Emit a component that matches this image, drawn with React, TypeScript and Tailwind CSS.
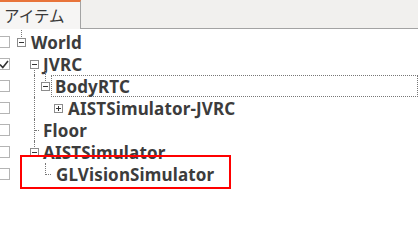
const Expander = ({ open }: { open: boolean }) => (
  <span className="relative flex h-[9px] w-[9px] items-center justify-center border border-[#8c8c8c] bg-white">
    <span className="absolute h-[1px] w-[5px] bg-[#333]" />
    {!open && <span className="absolute h-[5px] w-[1px] bg-[#333]" />}
  </span>
);

const Check = ({ checked }: { checked?: boolean }) => (
  <span className="ml-[-3px] flex h-[12px] w-[13px] shrink-0 items-center justify-center border border-[#b4b4b4] bg-white">
    {checked && (
      <svg width="10" height="9" viewBox="0 0 10 9">
        <path d="M1 4.5 L3.8 7.5 L9 1" fill="none" stroke="#333" strokeWidth="1.6" />
      </svg>
    )}
  </span>
);

const label = "text-[17px] font-bold leading-none tracking-[0.15px] text-[#3c3c3c] whitespace-nowrap";

export default function App() {
  return (
    <div className="relative h-[252px] w-[418px] overflow-hidden bg-white font-['Noto_Sans',sans-serif]">
      {/* tab bar */}
      <div className="flex h-[29px] border-b border-[#a3a3a3] bg-[#f1f0ee]">
        <div className="mb-[-1px] flex h-[29px] w-[81px] items-center border-r border-[#a3a3a3] border-t-2 border-t-[#e8743b] bg-[#f6f5f4] pl-[4px]">
          <span className="font-['Noto_Sans_CJK_JP',sans-serif] text-[15.5px] leading-none text-[#3a3a3a]">アイテム</span>
        </div>
      </div>

      <div className="pt-[2px]">
        {/* World */}
        <div className="relative flex h-[22px] items-center">
          <Check />
          <span className="absolute left-[21px] top-[-1px] h-[7px] border-l border-dotted border-[#777]" />
          <span className="ml-[7px]"><Expander open /></span>
          <span className={`ml-[5px] ${label}`}>World</span>
        </div>
        {/* JVRC */}
        <div className="relative flex h-[22px] items-center">
          <Check checked />
          <span className="absolute left-[34px] top-[15px] h-[7px] border-l border-dotted border-[#777]" />
          <span className="ml-[20px]"><Expander open /></span>
          <span className={`ml-[4px] ${label}`}>JVRC</span>
        </div>
        {/* BodyRTC */}
        <div className="relative flex h-[22px] items-center">
          <Check />
          <span className="absolute left-[34px] top-0 h-[22px] border-l border-dotted border-[#777]" />
          <span className="absolute left-[45px] top-[-5px] h-[11px] border-l border-dotted border-[#777]" />
          <span className="ml-[31px]"><Expander open /></span>
          <div className="ml-[1px] flex h-[22px] flex-1 items-center border border-dotted border-[#777] pl-[3px]">
            <span className={label}>BodyRTC</span>
          </div>
        </div>
        {/* AISTSimulator-JVRC */}
        <div className="relative flex h-[22px] items-center">
          <Check />
          <span className="absolute left-[34px] top-0 h-[22px] border-l border-dotted border-[#777]" />
          <span className="ml-[44px]"><Expander open={false} /></span>
          <span className={`ml-[5px] ${label}`}>AISTSimulator-JVRC</span>
        </div>
        {/* Floor */}
        <div className="relative flex h-[22px] items-center">
          <Check />
          <span className="absolute left-[34px] top-0 h-[22px] border-l border-dotted border-[#777]" />
          <span className="absolute left-[35px] top-[11px] w-[4px] border-t border-dotted border-[#777]" />
          <span className={`ml-[33px] ${label}`}>Floor</span>
        </div>
        {/* AISTSimulator */}
        <div className="relative flex h-[22px] items-center">
          <Check />
          <span className="absolute left-[34px] top-0 h-[6px] border-l border-dotted border-[#777]" />
          <span className="ml-[20px]"><Expander open /></span>
          <span className={`ml-[4px] ${label}`}>AISTSimulator</span>
        </div>
        {/* GLVisionSimulator */}
        <div className="relative flex h-[22px] items-center">
          <Check />
          <span className="absolute left-[45px] top-0 h-[12px] border-l border-dotted border-[#777]" />
          <span className="absolute left-[46px] top-[11px] w-[5px] border-t border-dotted border-[#777]" />
          <span className={`ml-[46px] ${label}`}>GLVisionSimulator</span>
        </div>
      </div>

      {/* highlight box */}
      <div className="absolute left-[20px] top-[155px] h-[34px] w-[211px] border-[2px] border-[#ff0000]" />
    </div>
  );
}
